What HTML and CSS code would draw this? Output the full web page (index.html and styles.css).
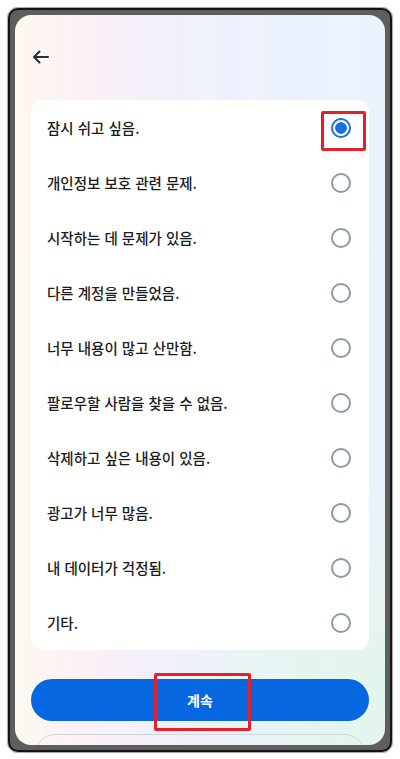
FILE: index.html
```html
<!DOCTYPE html>
<html lang="ko">
<head>
<meta charset="utf-8">
<link rel="stylesheet" href="styles.css">
</head>
<body>
<div class="frame">
  <div class="screen">
    <div class="topbar">
      <svg class="back" width="18" height="14" viewBox="0 0 18 14" fill="none" stroke="#2a2f36" stroke-width="2" stroke-linecap="round" stroke-linejoin="round">
        <path d="M16 7H2M7.5 1.5L2 7l5.5 5.5"/>
      </svg>
    </div>
    <div class="card">
      <div class="row"><span>잠시 쉬고 싶음.</span><span class="radio-wrap hl"><span class="radio on"></span></span></div>
      <div class="row"><span>개인정보 보호 관련 문제.</span><span class="radio-wrap"><span class="radio"></span></span></div>
      <div class="row"><span>시작하는 데 문제가 있음.</span><span class="radio-wrap"><span class="radio"></span></span></div>
      <div class="row"><span>다른 계정을 만들었음.</span><span class="radio-wrap"><span class="radio"></span></span></div>
      <div class="row"><span>너무 내용이 많고 산만함.</span><span class="radio-wrap"><span class="radio"></span></span></div>
      <div class="row"><span>팔로우할 사람을 찾을 수 없음.</span><span class="radio-wrap"><span class="radio"></span></span></div>
      <div class="row"><span>삭제하고 싶은 내용이 있음.</span><span class="radio-wrap"><span class="radio"></span></span></div>
      <div class="row"><span>광고가 너무 많음.</span><span class="radio-wrap"><span class="radio"></span></span></div>
      <div class="row"><span>내 데이터가 걱정됨.</span><span class="radio-wrap"><span class="radio"></span></span></div>
      <div class="row"><span>기타.</span><span class="radio-wrap"><span class="radio"></span></span></div>
    </div>
    <div class="actions">
      <button class="primary"><span class="btn-label">계속</span></button>
      <button class="secondary"></button>
    </div>
  </div>
</div>
</body>
</html>
```

FILE: styles.css
```css
* { box-sizing: border-box; }
html, body { margin: 0; padding: 0; background: #ffffff; }
body {
  width: 400px;
  height: 759px;
  overflow: hidden;
  font-family: "Noto Sans CJK KR", "Noto Sans", sans-serif;
}
.frame {
  margin: 8px 0 0 8px;
  width: 384px;
  height: 744px;
  border: 2px solid #141414;
  background: #5e5e5e;
  border-radius: 10px;
  padding: 5px;
  box-shadow: 0 0 1px 1px rgba(0,0,0,0.35);
}
.screen {
  width: 370px;
  height: 730px;
  border-radius: 16px;
  overflow: hidden;
  background:
    radial-gradient(ellipse 220px 200px at 100% 92%, rgba(226,246,234,0.95), rgba(226,246,234,0) 100%),
    linear-gradient(90deg, #fdf8f0 0%, #fcf0f5 18%, #f1f0fb 40%, #ecf2fb 70%, #eaf3fc 100%);
  padding: 0 16px;
  display: flex;
  flex-direction: column;
}
.screen > * { flex-shrink: 0; }
.topbar {
  height: 85px;
  display: flex;
  align-items: flex-start;
  padding-top: 35px;
  padding-left: 1px;
}
.back { display: block; }
.card {
  background: #ffffff;
  border-radius: 12px;
  width: 338px;
}
.row {
  height: 55px;
  display: flex;
  align-items: center;
  justify-content: space-between;
  padding: 0 18px 0 16px;
  font-size: 14.5px;
  font-weight: 500;
  color: #1a1c20;
}
.radio-wrap {
  position: relative;
  width: 20px;
  height: 20px;
  display: flex;
  align-items: center;
  justify-content: center;
}
.radio {
  width: 20px;
  height: 20px;
  border-radius: 50%;
  border: 2px solid #8c99a7;
  display: block;
}
.radio.on {
  border-color: #1a6fe0;
  background: radial-gradient(circle, #1a6fe0 0 5.5px, #ffffff 6px);
}
.hl::after {
  content: "";
  position: absolute;
  left: -10px;
  top: -7px;
  width: 39px;
  height: 34px;
  border: 3px solid #e5202b;
  border-radius: 2px;
}
.actions {
  display: flex;
  flex-direction: column;
  gap: 13px;
  padding-top: 29px;
}
.primary {
  position: relative;
  width: 338px;
  height: 42px;
  border: none;
  border-radius: 21px;
  background: #0767e0;
  color: #ffffff;
  font-family: inherit;
  font-size: 14px;
  font-weight: 700;
  padding: 0;
  display: flex;
  align-items: center;
  justify-content: center;
}
.btn-label { position: relative; }
.primary::after {
  content: "";
  position: absolute;
  left: 123px;
  top: -6px;
  width: 91px;
  height: 52px;
  border: 3px solid #e5202b;
  border-radius: 2px;
}
.secondary {
  margin: 0 4px;
  height: 40px;
  border: 1px solid #cfd6de;
  border-radius: 20px;
  background: transparent;
}
```
